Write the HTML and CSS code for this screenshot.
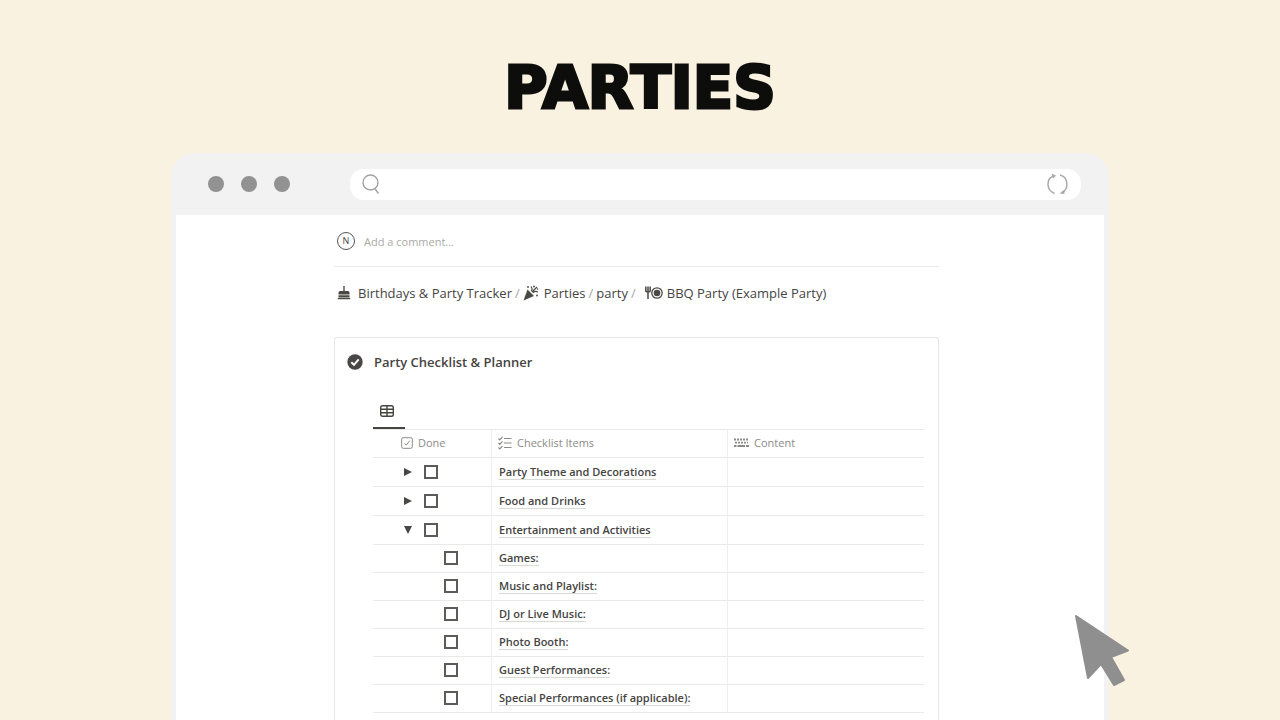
FILE: index.html
```html
<!DOCTYPE html>
<html lang="en">
<head>
<meta charset="utf-8">
<title>Parties</title>
<link rel="stylesheet" href="styles.css">
</head>
<body>
<h1 class="title">PARTIES</h1>
<main class="window">
  <header class="bar">
    <span class="dot"></span><span class="dot"></span><span class="dot"></span>
    <div class="search">
      <svg width="20" height="22" viewBox="0 0 20 22" fill="none" stroke="#a3a3a3" stroke-width="1.4"><circle cx="8.500" cy="9.500" r="7.500"/><path d="M12.800 15.500L16.500 20.500"/></svg>
      <input class="search-input" type="text" aria-label="Search">
      <button class="plain" aria-label="Reload"><svg width="24" height="24" viewBox="0 0 24 24"><path d="M9.500 21.500C1 18 1 7 8.500 4M15 3C23.500 5 24 17.500 17 20.500" fill="none" stroke="#aaa" stroke-width="1.500"/><path d="M6.500 1.500L11 3.500L8.500 6.500zM19 18L19.500 22L14.500 21.500z" fill="#aaa"/></svg></button>
    </div>
  </header>
  <div class="page">
    <div class="comment">
      <span class="avatar">N</span>
      <input class="comment-input" type="text" placeholder="Add a comment..." aria-label="Add a comment">
    </div>
    <nav class="crumbs">
      <a class="crumb" href="#"><svg width="14" height="16" viewBox="0 0 14 16" fill="#4a4946"><path d="M6.300 1h1.400v5H11a1.500 1.500 0 0 1 1.500 1.500V9.500h-11V7.500A1.500 1.500 0 0 1 3 6h3.300zM1.500 10.300h11v2.200h-11zM.8 13h12.400v1.200H.8z"/></svg>Birthdays &amp; Party Tracker</a>
      <span class="slash">/</span>
      <a class="crumb tight" href="#"><svg width="16" height="16" viewBox="0 0 16 16" fill="#4a4946"><path d="M4.500 4.500L11 11L.5 15.500z"/><path d="M8 6c2-1 1-3 0-4.500M10 8c1-2 3-2 5-1M9 7l5-5" fill="none" stroke="#4a4946" stroke-width="1.2"/><circle cx="5" cy="2" r=".9"/><circle cx="11" cy="1.500" r=".9"/><circle cx="14.500" cy="4" r=".8"/><circle cx="14" cy="10.500" r=".9"/></svg>Parties</a>
      <span class="slash">/</span>
      <a class="crumb" href="#">party</a>
      <span class="slash">/</span>
      <a class="crumb last" href="#"><svg width="18" height="14" viewBox="0 0 18 14"><path d="M.8.500v4q0 1.500 2.200 1.500t2.200-1.500v-4M3 .5V13" fill="none" stroke="#4a4946" stroke-width="1.500"/><circle cx="12" cy="7" r="5.200" fill="none" stroke="#4a4946" stroke-width="1.300"/><circle cx="12" cy="7" r="3.300" fill="#4a4946"/></svg>BBQ Party (Example Party)</a>
    </nav>
    <section class="card">
      <h2 class="card-title"><svg width="16" height="16" viewBox="0 0 16 16"><circle cx="8" cy="8" r="7.700" fill="#484745"/><path d="M4.300 8.300L7 10.800L11.700 5.300" fill="none" stroke="#fff" stroke-width="2"/></svg>Party Checklist &amp; Planner</h2>
      <div class="board">
        <div class="tabs"><button class="plain tab" aria-label="Table view"><svg width="14" height="12" viewBox="0 0 14 12" fill="none" stroke="#45443f" stroke-width="1.400"><rect x=".7" y=".7" width="12.600" height="10.600" rx="1.800"/><path d="M1 4.300h12M1 7.700h12M7 1v10"/></svg></button></div>
        <table class="list">
          <thead>
            <tr>
              <th class="col-done"><span class="head"><svg width="12" height="12" viewBox="0 0 12 12" fill="none" stroke="#8b8a87"><rect x=".7" y=".7" width="10.600" height="10.600" rx="1.500"/><path d="M3.500 6.300l1.800 1.900L8.700 3.700"/></svg>Done</span></th>
              <th class="col-item"><span class="head"><svg width="14" height="14" viewBox="0 0 14 14" fill="none" stroke="#8b8a87" stroke-width="1.200"><path d="M6 2.500h7.500M6 7h7.500M6 11.500h7.500M.5 2.500l1.300 1.300L4.500.800M.5 7l1.300 1.300L4.500 5.300M.5 11.500l1.300 1.300L4.500 9.800"/></svg>Checklist Items</span></th>
              <th><span class="head"><svg width="15" height="10" viewBox="0 0 15 10" fill="none" stroke="#8b8a87" stroke-width="1.800"><path d="M0 1.500h15" stroke-dasharray="2 1"/><path d="M1 4.700h13" stroke-dasharray="2 1"/><path d="M0 8h2.500M3.500 8h7.500M12 8h3"/></svg>Content</span></th>
            </tr>
          </thead>
          <tbody>
            <tr class="group"><td><span class="done"><button class="plain toggle" aria-label="Expand"><svg width="8" height="8" viewBox="0 0 8 8"><path d="M0 0l8 4l-8 4z" fill="#484745"/></svg></button><input class="tick" type="checkbox" aria-labelledby="r1"></span></td><td><a class="name" id="r1" href="#">Party Theme and Decorations</a></td><td></td></tr>
            <tr class="group"><td><span class="done"><button class="plain toggle" aria-label="Expand"><svg width="8" height="8" viewBox="0 0 8 8"><path d="M0 0l8 4l-8 4z" fill="#484745"/></svg></button><input class="tick" type="checkbox" aria-labelledby="r2"></span></td><td><a class="name" id="r2" href="#">Food and Drinks</a></td><td></td></tr>
            <tr class="group"><td><span class="done"><button class="plain toggle" aria-label="Collapse"><svg width="8" height="8" viewBox="0 0 8 8"><path d="M0 0h8l-4 8z" fill="#484745"/></svg></button><input class="tick" type="checkbox" aria-labelledby="r3"></span></td><td><a class="name" id="r3" href="#">Entertainment and Activities</a></td><td></td></tr>
            <tr><td><span class="done child"><input class="tick" type="checkbox" aria-labelledby="r4"></span></td><td><a class="name" id="r4" href="#">Games:</a></td><td></td></tr>
            <tr><td><span class="done child"><input class="tick" type="checkbox" aria-labelledby="r5"></span></td><td><a class="name" id="r5" href="#">Music and Playlist:</a></td><td></td></tr>
            <tr><td><span class="done child"><input class="tick" type="checkbox" aria-labelledby="r6"></span></td><td><a class="name" id="r6" href="#">DJ or Live Music:</a></td><td></td></tr>
            <tr><td><span class="done child"><input class="tick" type="checkbox" aria-labelledby="r7"></span></td><td><a class="name" id="r7" href="#">Photo Booth:</a></td><td></td></tr>
            <tr><td><span class="done child"><input class="tick" type="checkbox" aria-labelledby="r8"></span></td><td><a class="name" id="r8" href="#">Guest Performances:</a></td><td></td></tr>
            <tr><td><span class="done child"><input class="tick" type="checkbox" aria-labelledby="r9"></span></td><td><a class="name" id="r9" href="#">Special Performances (if applicable):</a></td><td></td></tr>
          </tbody>
        </table>
      </div>
    </section>
  </div>
  <svg class="cursor" width="54" height="72" viewBox="0 0 54 72"><path d="M1 1L53 35.500L36 42L49 65L39 70L26 49L13 63z" fill="#8f8f8f" stroke="#8f8f8f" stroke-width="2" stroke-linejoin="round"/></svg>
</main>
</body>
</html>
```
FILE: styles.css
```css
* { box-sizing: border-box; }
body {
  margin: 0;
  min-height: 100vh;
  display: flex;
  flex-direction: column;
  background: #faf2e1;
  color: #45443f;
  font-family: "Open Sans", "Noto Sans", sans-serif;
  font-size: 13px;
  line-height: 20px;
}
svg { display: block; flex: none; }
a { color: inherit; text-decoration: none; }
.plain { padding: 0; border: 0; background: none; }
.title {
  margin: 0;
  padding: 52px 0 29px;
  text-align: center;
  font-family: "DejaVu Sans", sans-serif;
  font-weight: 700;
  font-size: 59px;
  line-height: 72px;
  color: #0d0d0c;
  -webkit-text-stroke: 3px #0d0d0c;
}
.window {
  position: relative;
  flex: 1;
  display: flex;
  flex-direction: column;
  margin: 0 171px;
  border: solid #f2f2f3;
  border-width: 0 5px;
  border-radius: 24px 24px 0 0;
  background: #fff;
}
.bar {
  display: flex;
  align-items: center;
  gap: 17px;
  height: 62px;
  padding: 0 23px 0 32px;
  border-radius: 20px 20px 0 0;
  background: #f2f2f2;
}
.dot { width: 16px; height: 16px; border-radius: 50%; background: #929292; }
.search {
  flex: 1;
  display: flex;
  align-items: center;
  height: 31px;
  margin-left: 43px;
  padding: 0 12px;
  border-radius: 14px;
  background: #fff;
}
.search-input { flex: 1; border: 0; background: none; outline: 0; }
.page {
  flex: 1;
  display: flex;
  flex-direction: column;
  padding: 0 165px 0 158px;
}
.comment {
  display: flex;
  align-items: center;
  gap: 9px;
  height: 52px;
  padding-left: 3px;
  border-bottom: 1px solid #e9e9e8;
}
.avatar {
  width: 18px;
  height: 18px;
  border: 1px solid #555;
  border-radius: 50%;
  font-size: 9px;
  line-height: 16px;
  text-align: center;
}
.comment-input {
  flex: 1;
  padding: 3px 0 0;
  border: 0;
  background: none;
  font: 11px/20px "Open Sans", sans-serif;
}
.comment-input::placeholder { color: #aaa9a7; opacity: 1; }
.crumbs { display: flex; align-items: center; gap: 3px; height: 52px; padding-left: 3px; }
.crumb { display: flex; align-items: center; gap: 7px; }
.last { gap: 4px; padding-left: 6px; }
.tight { gap: 5px; }
.slash { color: #a5a5a3; }
.card {
  flex: 1;
  margin-top: 18px;
  padding: 14px 14px 0 12px;
  border: 1px solid #e6e6e5;
  border-bottom: 0;
  border-radius: 3px 3px 0 0;
}
.card-title { display: flex; align-items: center; gap: 11px; margin: 0; font-size: 13px; font-weight: 600; line-height: 20px; }
.board { padding: 23px 0 0 26px; }
.tabs { border-bottom: 1px solid #e9e9e8; }
.tab { display: flex; justify-content: center; align-items: center; width: 32px; height: 34px; padding-right: 4px; border-bottom: 2px solid #45443f; }
.list { width: 100%; table-layout: fixed; border-spacing: 0; font-size: 11px; }
.list th, .list td { height: 28px; padding: 0 7px 2px; border-bottom: 1px solid #e9e9e8; text-align: left; line-height: 16px; }
.list th { padding: 0 6px 2px; }
.list .group td { height: 29px; padding-bottom: 1px; }
.list th + th, .list td + td { border-left: 1px solid #efefee; }
.list .col-done { width: 118px; padding-left: 28px; }
.col-item { width: 236px; }
.head { display: flex; align-items: center; gap: 5px; font-weight: 400; color: #8b8a87; }
.name { font-weight: 600; border-bottom: 1px solid #d9d9d6; }
.done { display: flex; align-items: center; padding-left: 24px; }
.child { padding-left: 64px; }
.toggle { width: 8px; margin-right: 12px; }
.tick { appearance: none; width: 14px; height: 14px; margin: 0; border: 2px solid #5c5b58; background: #fff; }
.cursor { position: absolute; top: 462px; right: -25px; }
```
